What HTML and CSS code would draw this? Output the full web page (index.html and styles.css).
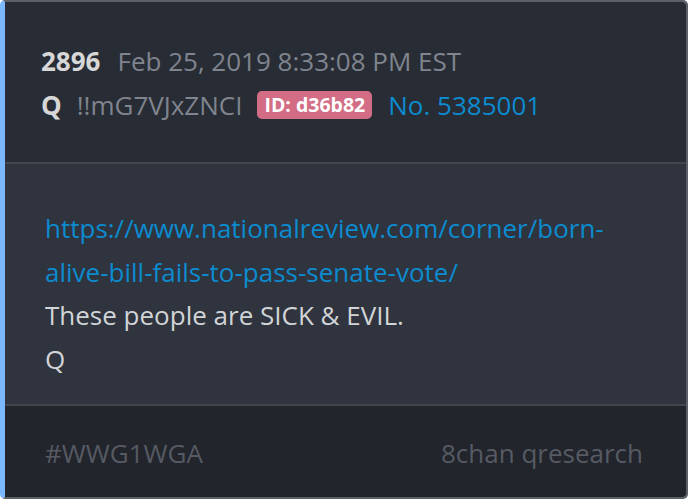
FILE: index.html
```html
<!DOCTYPE html>
<html>
<head>
<meta charset="utf-8">
<link rel="stylesheet" href="styles.css">
</head>
<body>
<div class="card">
  <div class="head">
    <div class="line"><span class="num">2896</span><span class="date">Feb 25, 2019 8:33:08 PM EST</span></div>
    <div class="line"><span class="name">Q</span><span class="trip">!!mG7VJxZNCI</span><span class="id">ID: d36b82</span><a class="no">No. 5385001</a></div>
  </div>
  <div class="body">
    <a class="link">https://www.nationalreview.com/corner/born-alive-bill-fails-to-pass-senate-vote/</a>
    <div>These people are SICK &amp; EVIL.</div>
    <div>Q</div>
  </div>
  <div class="foot">
    <span>#WWG1WGA</span>
    <span>8chan qresearch</span>
  </div>
</div>
</body>
</html>
```
FILE: styles.css
```css
html, body { margin: 0; padding: 0; background: #ffffff; }
body { width: 688px; height: 500px; font-family: "Open Sans", sans-serif; font-size: 26px; line-height: 43.5px; }
.card {
  box-sizing: border-box;
  width: 688px;
  height: 499px;
  border: 2px solid #5b5f67;
  border-left: 5px solid #7ab8ff;
  border-radius: 5px;
  overflow: hidden;
  display: flex;
  flex-direction: column;
}
.head { background: #282c34; padding: 38px 36px 35px; border-bottom: 2px solid #41454e; }
.line { display: flex; align-items: center; }
.num { font-weight: 700; color: #d7d7d7; margin-right: 17px; }
.date { color: #7f848e; }
.name { font-weight: 700; color: #d7d7d7; margin-right: 15px; }
.trip { color: #7f848e; margin-right: 15px; }
.id { background: #d26d85; color: #fff; font-weight: 700; font-size: 19.5px; line-height: 28px; padding: 0 7px; border-radius: 5px; margin-right: 16px; }
.no { color: #0c8bd0; }
.body { background: #2f343e; padding: 43px 40px 22px; color: #d2d4d7; flex: 1; border-bottom: 2px solid #41454e; }
.link { color: #0c8bd0; display: block; }
.foot { background: #22252c; padding: 26px 43px 22px 40px; display: flex; justify-content: space-between; color: #565a63; }
```
